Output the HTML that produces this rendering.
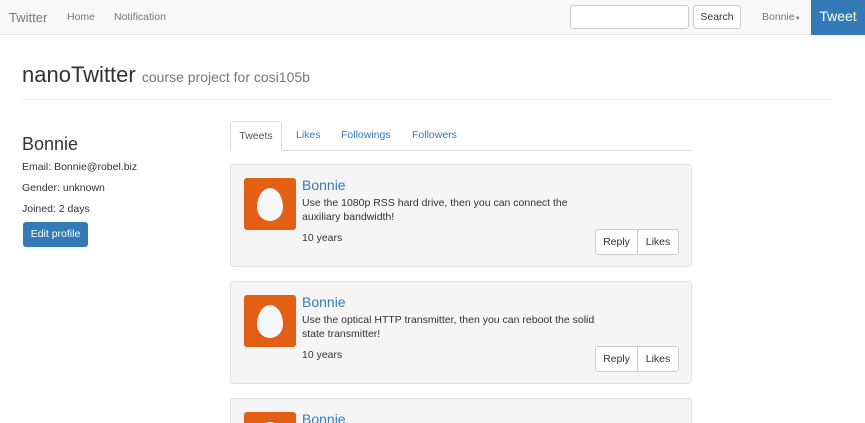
<!DOCTYPE html>
<html><head><style>
*{box-sizing:border-box;margin:0;padding:0}
html,body{width:865px;height:423px;overflow:hidden}
body{background:#fff;font-family:"Liberation Sans",sans-serif;color:#333;position:relative;font-size:10.5px}
.a{position:absolute}
.nav{left:0;top:0;width:865px;height:35px;background:#f8f8f8;border-bottom:1px solid #e7e7e7}
.card{left:230px;width:462px;height:103px;background:#f5f5f5;border:1px solid #e3e3e3;border-radius:3px}
.av{left:13px;top:13px;width:52px;height:52px;background:#e25f14;border-radius:3px}
.egg{left:13px;top:10px;width:26px;height:33px;background:#f5f8fa;border-radius:50% 50% 50% 50%/58% 58% 42% 42%}
.nm{left:71px;top:12px;font-size:14px;color:#337ab7}
.tx{left:71px;top:31px;font-size:10.5px;line-height:14px;white-space:nowrap}
.yr{left:71px;top:67px;font-size:10.5px}
.btn{top:64px;height:26px;background:#fff;border:1px solid #ccc;font-size:10.5px;line-height:24px;text-align:center}
</style></head><body>
<div class="a nav">
<div class="a" style="left:9px;top:10px;font-size:13px;color:#777">Twitter</div>
<div class="a" style="left:67px;top:11px;font-size:10.5px;color:#777">Home</div>
<div class="a" style="left:114px;top:11px;font-size:10.5px;color:#777">Notification</div>
<div class="a" style="left:570px;top:5px;width:119px;height:24px;background:#fff;border:1px solid #ccc;border-radius:3px"></div>
<div class="a" style="left:693px;top:5px;width:48px;height:24px;background:#fff;border:1px solid #ccc;border-radius:3px;text-align:center;line-height:22px;font-size:10.5px">Search</div>
<div class="a" style="left:762px;top:11px;font-size:10.5px;color:#777">Bonnie<span style="font-size:6px">▼</span></div>
<div class="a" style="left:811px;top:0;width:54px;height:35px;background:#337ab7;color:#fff;font-size:14px;text-align:center;line-height:33px">Tweet</div>
</div>
<div class="a" style="left:22px;top:62px;font-size:22px;color:#333">nanoTwitter <span style="font-size:14px;color:#777">course project for cosi105b</span></div>
<div class="a" style="left:22px;top:99px;width:808px;height:1px;background:#eee"></div>
<div class="a" style="left:22px;top:134px;font-size:18px">Bonnie</div>
<div class="a" style="left:22px;top:161px;font-size:10.5px">Email: Bonnie@robel.biz</div>
<div class="a" style="left:22px;top:182px;font-size:10.5px">Gender: unknown</div>
<div class="a" style="left:22px;top:203px;font-size:10.5px">Joined: 2 days</div>
<div class="a" style="left:23px;top:222px;width:65px;height:25px;background:#337ab7;border-radius:3px;color:#fff;font-size:10.5px;text-align:center;line-height:25px">Edit profile</div>
<div class="a" style="left:230px;top:150px;width:462px;height:1px;background:#ddd"></div>
<div class="a" style="left:230px;top:121px;width:52px;height:30px;background:#fff;border:1px solid #ddd;border-bottom-color:#fff;border-radius:3px 3px 0 0;text-align:center;line-height:28px;font-size:10.5px;color:#555">Tweets</div>
<div class="a" style="left:296px;top:129px;font-size:10.5px;color:#337ab7">Likes</div>
<div class="a" style="left:341px;top:129px;font-size:10.5px;color:#337ab7">Followings</div>
<div class="a" style="left:412px;top:129px;font-size:10.5px;color:#337ab7">Followers</div>

<div class="a card" style="top:164px">
<div class="a av"><div class="a egg"></div></div>
<div class="a nm">Bonnie</div>
<div class="a tx">Use the 1080p RSS hard drive, then you can connect the<br>auxiliary bandwidth!</div>
<div class="a yr">10 years</div>
<div class="a btn" style="left:364px;width:43px;border-radius:3px 0 0 3px">Reply</div>
<div class="a btn" style="left:406px;width:42px;border-radius:0 3px 3px 0">Likes</div>
</div>
<div class="a card" style="top:281px">
<div class="a av"><div class="a egg"></div></div>
<div class="a nm">Bonnie</div>
<div class="a tx">Use the optical HTTP transmitter, then you can reboot the solid<br>state transmitter!</div>
<div class="a yr">10 years</div>
<div class="a btn" style="left:364px;width:43px;border-radius:3px 0 0 3px">Reply</div>
<div class="a btn" style="left:406px;width:42px;border-radius:0 3px 3px 0">Likes</div>
</div>
<div class="a card" style="top:398px;height:25px;border-bottom:none;border-radius:3px 3px 0 0;overflow:hidden">
<div class="a av"><div class="a egg"></div></div>
<div class="a nm">Bonnie</div>
</div>
</body></html>
